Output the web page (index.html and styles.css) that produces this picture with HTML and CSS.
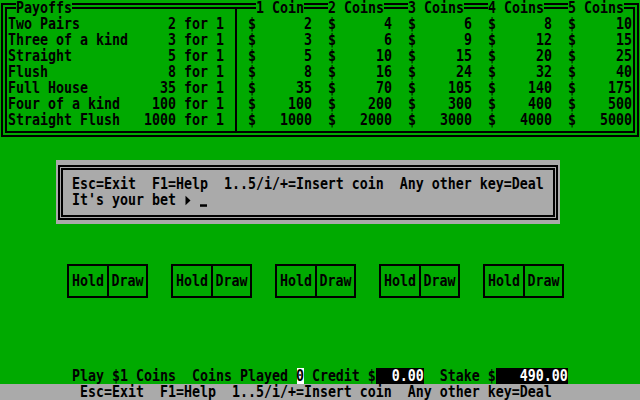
FILE: index.html
```html
<!DOCTYPE html>
<html lang="en">
<head>
<meta charset="utf-8">
<title>Video Poker</title>
<link rel="stylesheet" href="styles.css">
</head>
<body>
<div class="screen">
  <div class="frame"></div>
  <div class="sep"></div>
  <div class="lg lg-pay">Payoffs</div>
  <div class="lg lg-1">1 Coin</div>
  <div class="lg lg-2">2 Coins</div>
  <div class="lg lg-3">3 Coins</div>
  <div class="lg lg-4">4 Coins</div>
  <div class="lg lg-5">5 Coins</div>

  <div class="paybody">
    <div class="prow"><span class="pname">Two Pairs</span><span class="pmul">2</span><span class="pfor"> for 1</span><span class="pc first"><span>$</span><span>2</span></span><span class="pc"><span>$</span><span>4</span></span><span class="pc"><span>$</span><span>6</span></span><span class="pc"><span>$</span><span>8</span></span><span class="pc"><span>$</span><span>10</span></span></div>
    <div class="prow"><span class="pname">Three of a kind</span><span class="pmul">3</span><span class="pfor"> for 1</span><span class="pc first"><span>$</span><span>3</span></span><span class="pc"><span>$</span><span>6</span></span><span class="pc"><span>$</span><span>9</span></span><span class="pc"><span>$</span><span>12</span></span><span class="pc"><span>$</span><span>15</span></span></div>
    <div class="prow"><span class="pname">Straight</span><span class="pmul">5</span><span class="pfor"> for 1</span><span class="pc first"><span>$</span><span>5</span></span><span class="pc"><span>$</span><span>10</span></span><span class="pc"><span>$</span><span>15</span></span><span class="pc"><span>$</span><span>20</span></span><span class="pc"><span>$</span><span>25</span></span></div>
    <div class="prow"><span class="pname">Flush</span><span class="pmul">8</span><span class="pfor"> for 1</span><span class="pc first"><span>$</span><span>8</span></span><span class="pc"><span>$</span><span>16</span></span><span class="pc"><span>$</span><span>24</span></span><span class="pc"><span>$</span><span>32</span></span><span class="pc"><span>$</span><span>40</span></span></div>
    <div class="prow"><span class="pname">Full House</span><span class="pmul">35</span><span class="pfor"> for 1</span><span class="pc first"><span>$</span><span>35</span></span><span class="pc"><span>$</span><span>70</span></span><span class="pc"><span>$</span><span>105</span></span><span class="pc"><span>$</span><span>140</span></span><span class="pc"><span>$</span><span>175</span></span></div>
    <div class="prow"><span class="pname">Four of a kind</span><span class="pmul">100</span><span class="pfor"> for 1</span><span class="pc first"><span>$</span><span>100</span></span><span class="pc"><span>$</span><span>200</span></span><span class="pc"><span>$</span><span>300</span></span><span class="pc"><span>$</span><span>400</span></span><span class="pc"><span>$</span><span>500</span></span></div>
    <div class="prow"><span class="pname">Straight Flush</span><span class="pmul">1000</span><span class="pfor"> for 1</span><span class="pc first"><span>$</span><span>1000</span></span><span class="pc"><span>$</span><span>2000</span></span><span class="pc"><span>$</span><span>3000</span></span><span class="pc"><span>$</span><span>4000</span></span><span class="pc"><span>$</span><span>5000</span></span></div>
  </div>

  <div class="dialog">
    <div class="dbox">
      <div class="dline">Esc=Exit  F1=Help  1..5/i/+=Insert coin  Any other key=Deal</div>
      <div class="dline">It's your bet <svg class="glyph" width="8" height="13" viewBox="0 1.6 8 12.8"><path d="M1.5 4.2V11.8L6.5 8Z"/></svg> <svg class="glyph" width="8" height="13" viewBox="0 1.6 8 12.8"><rect x="0" y="11" width="7" height="2"/></svg></div>
    </div>
  </div>

  <div class="holds">
    <div class="hbox"><span class="hcell hold"><span class="tx">Hold</span></span><span class="hcell draw"><span class="tx">Draw</span></span></div>
    <div class="hbox"><span class="hcell hold"><span class="tx">Hold</span></span><span class="hcell draw"><span class="tx">Draw</span></span></div>
    <div class="hbox"><span class="hcell hold"><span class="tx">Hold</span></span><span class="hcell draw"><span class="tx">Draw</span></span></div>
    <div class="hbox"><span class="hcell hold"><span class="tx">Hold</span></span><span class="hcell draw"><span class="tx">Draw</span></span></div>
    <div class="hbox"><span class="hcell hold"><span class="tx">Hold</span></span><span class="hcell draw"><span class="tx">Draw</span></span></div>
  </div>

  <div class="status">
    <span class="tx">Play $1 Coins  Coins Played </span><span class="hi"><span class="tx">0</span></span><span class="tx"> Credit $</span><span class="fld"><span class="tx">  0.00</span></span><span class="tx">  Stake $</span><span class="fld"><span class="tx">   490.00</span></span>
  </div>

  <div class="help"><span class="tx">Esc=Exit  F1=Help  1..5/i/+=Insert coin  Any other key=Deal</span></div>
</div>
</body>
</html>
```

FILE: styles.css
```css
html, body {
  margin: 0;
  padding: 0;
  background: #00aa00;
}

.screen {
  width: 640px;
  height: 400px;
  overflow: hidden;
  display: grid;
  grid-template-columns: repeat(80, 8px);
  grid-template-rows: repeat(25, 16px);
  background: #00aa00;
  color: #000;
  font-family: "DejaVu Sans Mono", "Liberation Mono", monospace;
  font-weight: bold;
  font-size: 13.29px;
  line-height: 16px;
}

/* text cells: 12.8px line stretched vertically to fill a 16px row */
.tx,
.lg,
.prow,
.dline {
  display: block;
  white-space: pre;
  height: 12.8px;
  line-height: 12.8px;
  margin: 1.6px 0;
  transform: scaleY(1.25);
}

/* payoff table frame */
.frame {
  grid-area: 1 / 1 / 10 / 81;
  margin: 3px 1px 7px;
  border: 6px double #000;
}

.sep {
  grid-area: 1 / 30 / 10 / 31;
  margin: 9px 0 13px 3px;
  width: 2px;
  background: #000;
}

.lg {
  grid-row: 1;
  background: #00aa00;
}
.lg-pay { grid-column: 3 / 10; }
.lg-1 { grid-column: 33 / 39; }
.lg-2 { grid-column: 42 / 49; }
.lg-3 { grid-column: 52 / 59; }
.lg-4 { grid-column: 62 / 69; }
.lg-5 { grid-column: 72 / 79; }

.paybody {
  grid-area: 2 / 2 / 9 / 80;
  display: flex;
  flex-direction: column;
}

.prow {
  display: flex;
}

.pname { width: 136px; }
.pmul { width: 32px; text-align: right; }
.pfor { width: 48px; }

.pc {
  width: 64px;
  display: flex;
  justify-content: space-between;
  margin-left: 16px;
}
.pc.first { margin-left: 24px; }

/* dialog */
.dialog {
  grid-area: 11 / 8 / 15 / 71;
  background: #aaaaaa;
  display: flex;
}

.dbox {
  flex: 1;
  display: flex;
  flex-direction: column;
  margin: 5px 2px 4px;
  border: 5px double #000;
  padding: 6px 0 0 9px;
}

.glyph {
  vertical-align: top;
  fill: #000;
}

/* hold / draw buttons */
.holds {
  grid-area: 17 / 1 / 20 / 81;
  display: flex;
  align-items: flex-start;
  gap: 23px;
  padding: 8px 0 0 67px;
}

.hbox {
  display: flex;
  height: 34px;
  box-sizing: border-box;
  border: 2px solid #000;
}

.hcell {
  display: flex;
  align-items: center;
  justify-content: center;
}
.hold { width: 38px; border-right: 2px solid #000; }
.draw { width: 37px; }

/* status lines */
.status {
  grid-area: 24 / 1 / 25 / 81;
  display: flex;
  padding-left: 72px;
}

.hi {
  width: 7px;
  height: 16px;
  margin-left: 1px;
  background: #fff;
}
.hi .tx { margin-left: -1px; }

.fld {
  background: #000;
  color: #fff;
}

.help {
  grid-area: 25 / 1 / 26 / 81;
  background: #aaaaaa;
  padding-left: 80px;
}
```
